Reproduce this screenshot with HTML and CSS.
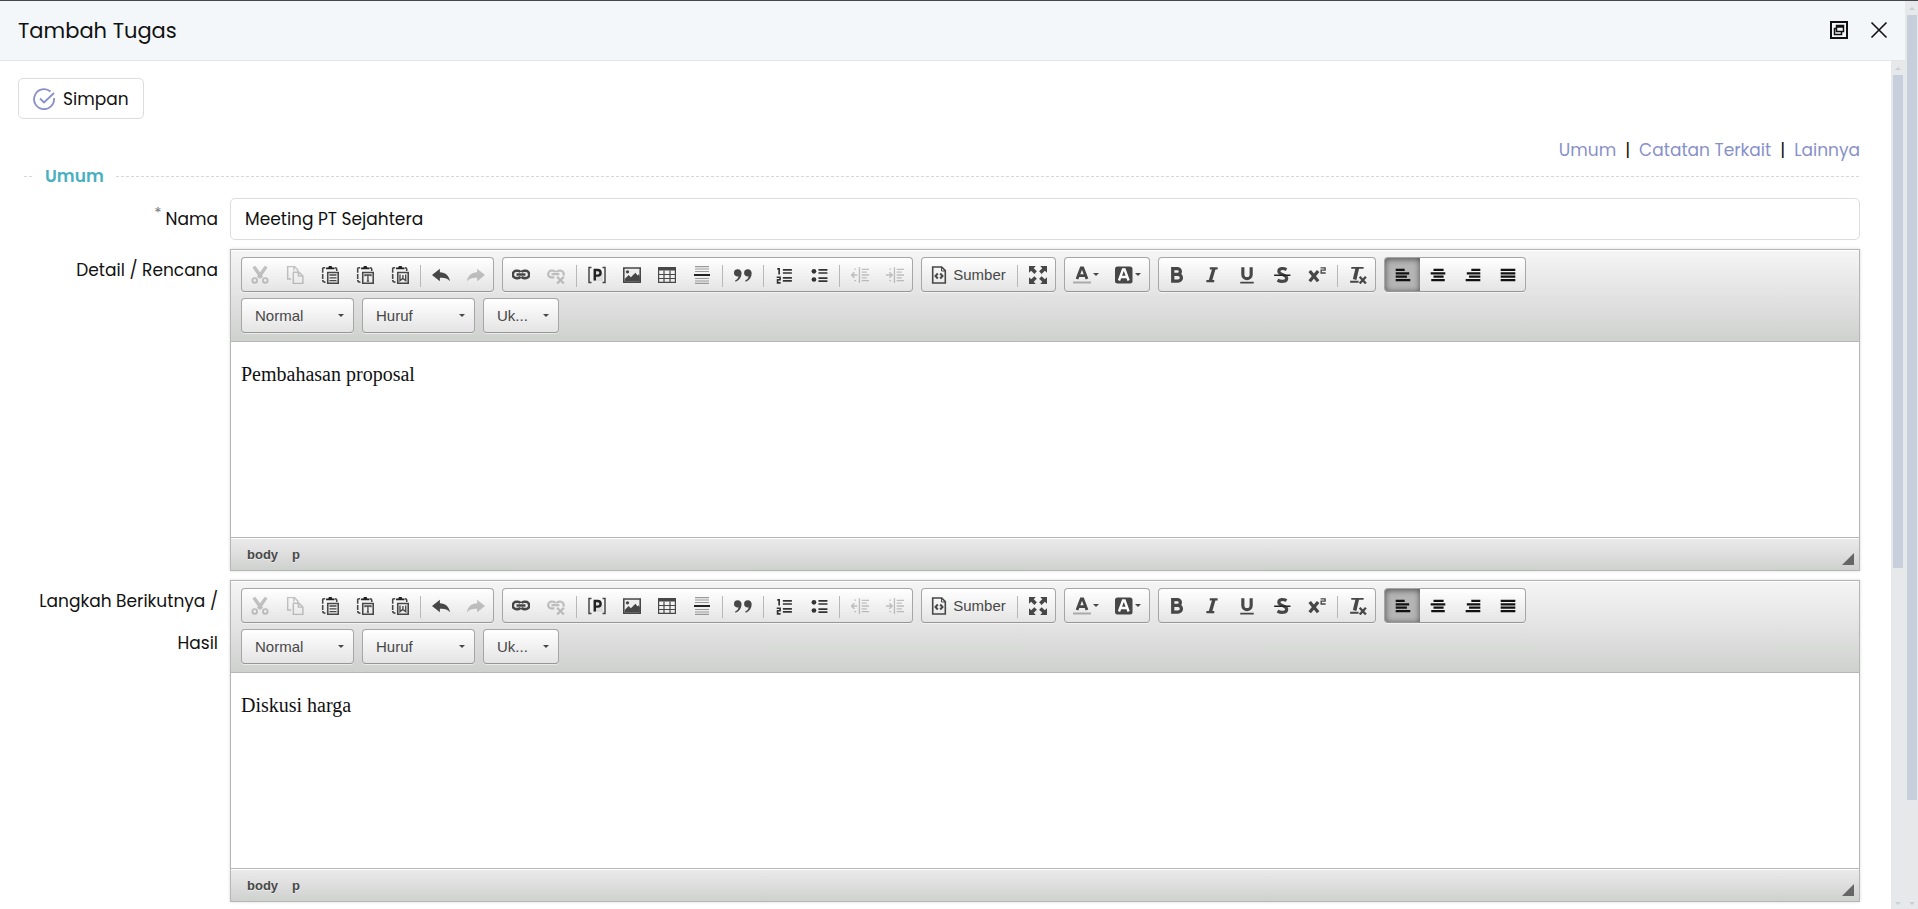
FILE: index.html
```html
<!DOCTYPE html>
<html lang="id">
<head>
    <meta charset="UTF-8">
    <meta name="viewport" content="width=device-width, initial-scale=1.0">
    <title>Tambah Tugas</title>
    <link rel="stylesheet" href="styles.css">
</head>
<body>

    <!-- icon set -->
    <svg class="icon-set" aria-hidden="true">
        <symbol id="i-cut" viewBox="0 0 16 16"><path d="M2.500 .500l7 10M13.500 .500l-7 10" fill="none" stroke="currentColor" stroke-width="3"/><circle cx="3.300" cy="12.800" r="2.100" fill="none" stroke="currentColor" stroke-width="1.600"/><circle cx="12.700" cy="12.800" r="2.100" fill="none" stroke="currentColor" stroke-width="1.600"/></symbol>
        <symbol id="i-copy" viewBox="0 0 16 16"><path d="M4.500 11.500h-3v-11h6l3 3v1.500M7 .500v3.500M6.500 5.500h5l3.500 3.500v6.500H6.500zM11 5.500V9h4" fill="none" stroke="currentColor" stroke-width="1.300"/></symbol>
        <symbol id="i-clip" viewBox="0 0 16 16"><path d="M3.700 1.500H2.500Q1.500 1.500 1.500 2.500V6M1.500 7v4.500M1.500 12.500q0 2 2.500 2M12.300 1.500q1.700 0 1.700 1.500v1.500" fill="none" stroke="currentColor" stroke-width="1.400"/><path d="M4.500 2.800V1.300h2L7 0h2.500l.500 1.300h2v1.500z" fill="#222"/><path d="M6 5.700h9.300v9.600H6z" fill="none" stroke="currentColor" stroke-width="1.400"/></symbol>
        <symbol id="i-paste" viewBox="0 0 16 16"><use href="#i-clip"/><path d="M7.500 8h6.300M7.500 10.500h6.300M7.500 13h6.300" stroke="currentColor" stroke-width="1.200"/></symbol>
        <symbol id="i-pastetext" viewBox="0 0 16 16"><use href="#i-clip"/><path d="M8 9V8h5.300v1M10.600 8v5.500M9.600 13.400h2" fill="none" stroke="currentColor" stroke-width="1.200"/></symbol>
        <symbol id="i-pasteword" viewBox="0 0 16 16"><use href="#i-clip"/><path d="M8 7.500v5.500l2.500-2 2.600 2V7.500M10.600 8v3" fill="none" stroke="currentColor" stroke-width="1.200"/></symbol>
        <symbol id="i-undo" viewBox="0 0 16 16"><path d="M0 8l7-5.500v3c5 0 8.500 3.500 9 8-2.500-2.800-5-3.200-9-3V13.500z" fill="currentColor"/></symbol>
        <symbol id="i-redo" viewBox="0 0 16 16"><path d="M16 8L9 2.500v3C4 5.500 .500 9 0 13.500c2.500-2.800 5-3.200 9-3V13.500z" fill="currentColor"/></symbol>
        <symbol id="i-link" viewBox="0 0 16 16"><path d="M7.500 5.500C7 4.500 6 4.200 5 4.200H4a3.200 3.200 0 0 0 0 6.600h1c1 0 2-.300 2.500-1.300M8.500 5.500c.500-1 1.500-1.300 2.500-1.300h1a3.200 3.200 0 0 1 0 6.600h-1c-1 0-2-.300-2.500-1.300" fill="none" stroke="currentColor" stroke-width="2.300"/><path d="M4 7.500h8" stroke="currentColor" stroke-width="2.200"/></symbol>
        <symbol id="i-unlink" viewBox="0 0 16 16"><path d="M7.500 5.500C7 4.500 6 4.200 5 4.200H4a3 3 0 0 0 0 6h2.500M8.500 5.500c.500-1 1.500-1.300 2.500-1.300h1a3 3 0 0 1 2.500 4.300M4 7.200h7" fill="none" stroke="currentColor" stroke-width="2"/><path d="M9 9.500l6 6M15 9.500l-6 6" stroke="currentColor" stroke-width="2"/></symbol>
        <symbol id="i-placeholder" viewBox="0 0 18 16"><path d="M3.500 .500H1v15h2.500M14.500 .500H17v15h-2.500" fill="none" stroke="currentColor" stroke-width="1.500"/><path d="M5 3h6l4 4v7H5z" fill="#ddd"/><path d="M6.800 13.500V3h3a2.700 2.700 0 0 1 0 5.600h-3" fill="none" stroke="#222" stroke-width="2.400"/></symbol>
        <symbol id="i-image" viewBox="0 0 16 16"><path d="M.700 1.700h14.600v12.600H.700z" fill="#eee" stroke="currentColor" stroke-width="1.400"/><circle cx="4" cy="5.200" r="1.500" fill="currentColor"/><path d="M1.500 13.500v-2l3.500-3.500 2 2 4-4 2 2.500 1-1.200 1 2v4.200z" fill="currentColor"/></symbol>
        <symbol id="i-table" viewBox="0 0 18 16"><path d="M0 0h18v3.500H0z" fill="currentColor"/><path d="M.600 3v12.400h16.800V3M6 3.500V15M12 3.500V15M0 7.500h18M0 11.500h18" fill="none" stroke="currentColor" stroke-width="1.200"/></symbol>
        <symbol id="i-break" viewBox="0 0 16 18"><path d="M1 .600h14M1 3h14M1 5.500h14M1 12.500h14M1 15h14M1 17.400h14" stroke="#999" stroke-width="1.200"/><path d="M0 9h16" stroke="#222" stroke-width="2"/></symbol>
        <symbol id="i-quote" viewBox="0 0 16 16"><g fill="currentColor"><path d="M3.300 3a3.200 3.200 0 0 1 3.400 3.500C6.700 10 5 12.500 1.500 14l-.700-1C2.800 12 4 10.800 4 9.200A3 3 0 0 1 0 6.200 3.200 3.200 0 0 1 3.300 3z"/><path d="M12.300 3a3.200 3.200 0 0 1 3.400 3.500c0 3.500-1.700 6-5.200 7.500l-.700-1c2-1 3.200-2.200 3.200-3.800a3 3 0 0 1-4-3A3.200 3.200 0 0 1 12.300 3z"/></g></symbol>
        <symbol id="i-ol" viewBox="0 0 16 16"><path d="M2 2.500h1.700V7.500M1.500 10h3v2.200H2.300V15H5" fill="none" stroke="#333" stroke-width="1.500"/><path d="M7 3.500h8M7 6.200h8M7 10.500h8M7 13.200h8" stroke="#333" stroke-width="1.500"/></symbol>
        <symbol id="i-ul" viewBox="0 0 16 16"><circle cx="3.500" cy="4.700" r="2.100" fill="#333"/><circle cx="3.500" cy="12" r="2.100" fill="#333"/><path d="M7.500 3.500h8M7.500 6.200h8M7.500 10.700h8M7.500 13.400h8" stroke="#333" stroke-width="1.500"/></symbol>
        <symbol id="i-outdent" viewBox="0 0 16 16"><path d="M7.500 1v14" stroke="currentColor" stroke-width="1.200"/><path d="M9.500 3H16M9.500 5.500h4.500M9.500 8H16M9.500 10.500h4.500M9.500 13H16M0 8h5.500M3 5.500L.500 8 3 10.500M3 2.800h1.500M3 13h1.500" fill="none" stroke="currentColor" stroke-width="1.200"/></symbol>
        <symbol id="i-indent" viewBox="0 0 16 16"><path d="M7.500 1v14" stroke="currentColor" stroke-width="1.200"/><path d="M9.500 3H16M9.500 5.500h4.500M9.500 8H16M9.500 10.500h4.500M9.500 13H16M0 8h5.500M3 5.500L5.500 8 3 10.500M3 2.800h1.500M3 13h1.500" fill="none" stroke="currentColor" stroke-width="1.200"/></symbol>
        <symbol id="i-source" viewBox="0 0 16 18"><path d="M1.700 1h9l3.600 3.600V17H1.700z" fill="none" stroke="currentColor" stroke-width="1.600"/><path d="M10.500 1v4h4" fill="none" stroke="currentColor"/><path d="M6.800 7.500L4.500 10l2.300 2.500M9.200 7.500l2.300 2.500-2.300 2.500" fill="none" stroke="currentColor" stroke-width="2"/></symbol>
        <symbol id="i-max" viewBox="0 0 16 16"><path d="M0 0h6L4.200 1.900 7 4.700 4.800 7 1.900 4.200 0 6zM16 0h-6l1.800 1.900L9 4.700 11.200 7l2.900-2.800L16 6zM0 16h6l-1.800-1.900L7 11.300 4.800 9l-2.900 2.800L0 10zM16 16h-6l1.800-1.900L9 11.300 11.200 9l2.900 2.800L16 10z" fill="currentColor"/></symbol>
        <symbol id="i-color" viewBox="0 0 18 18"><path d="M4 13L8.200 2h1.600L14 13M5.500 9.700h7" fill="none" stroke="currentColor" stroke-width="2.800"/><path d="M0 15.500h18v2H0z" fill="#aaa"/></symbol>
        <symbol id="i-bgcolor" viewBox="0 0 18 18"><rect width="17.500" height="17" rx="2.500" y=".500" fill="currentColor"/><path d="M4 14.500L8 3.500h1.600l4 11M5.500 11h7" fill="none" stroke="#fff" stroke-width="2.400"/></symbol>
        <symbol id="i-bold" viewBox="0 0 16 16"><path d="M4.200 2.300h4.200a2.600 2.600 0 0 1 0 5.200H4.200h4.700a3 3 0 0 1 0 6H4.200z" fill="none" stroke="currentColor" stroke-width="2.900"/></symbol>
        <symbol id="i-italic" viewBox="0 0 16 16"><path d="M6 2h7M3 13.500h7" stroke="currentColor" stroke-width="2"/><path d="M9.800 2L6.300 14" stroke="currentColor" stroke-width="3"/></symbol>
        <symbol id="i-underline" viewBox="0 0 16 16"><path d="M4.300 1V7.500a3.700 3.700 0 0 0 7.400 0V1" fill="none" stroke="currentColor" stroke-width="2.800"/><path d="M2 14.700h12" stroke="currentColor" stroke-width="1.500"/></symbol>
        <symbol id="i-strike" viewBox="0 0 16 16"><path d="M12 3.200C9.500 1.800 5.200 1.700 5.200 4.600c0 3.300 7 2.800 7 6.200 0 3.500-5.200 3.400-8.200 1.700" fill="none" stroke="currentColor" stroke-width="2.800"/><path d="M1 8.200h14.500" stroke="#222" stroke-width="1.500"/></symbol>
        <symbol id="i-sup" viewBox="0 0 16 16"><path d="M1.500 4.500l7.500 9M9 4.500l-7.500 9" stroke="currentColor" stroke-width="2.900"/><path d="M11.200 1.700h4v2h-3.500v2.500h4" fill="none" stroke="currentColor" stroke-width="1.200"/></symbol>
        <symbol id="i-clear" viewBox="0 0 16 16"><path d="M2 1.700h11M1 14h7.500" stroke="currentColor" stroke-width="1.600"/><path d="M7.500 1.500L5 12" stroke="currentColor" stroke-width="3.200"/><path d="M9.500 9.500l5.500 6M15 9.500l-5.500 6" stroke="currentColor" stroke-width="2.100"/></symbol>
        <symbol id="i-left" viewBox="0 0 16 16"><path d="M1.500 3h8M1.500 6h12M1.500 9h10M1.500 12h13" transform="translate(0 .500)" stroke="#111" stroke-width="1.900"/></symbol>
        <symbol id="i-center" viewBox="0 0 16 16"><path d="M4 3h9M1.500 6h13M4 9h9M2 12h12" transform="translate(0 .500)" stroke="#111" stroke-width="1.900"/></symbol>
        <symbol id="i-right" viewBox="0 0 16 16"><path d="M6.500 3h8M2.500 6h12M4.500 9h10M1.500 12h13" transform="translate(0 .500)" stroke="#111" stroke-width="1.900"/></symbol>
        <symbol id="i-justify" viewBox="0 0 16 16"><path d="M1.500 3h13M1.500 6h13M1.500 9h13M1.500 12h13" transform="translate(0 .500)" stroke="#111" stroke-width="1.900"/></symbol>
    </svg>

    <!-- toolbar shared by every editor on the form -->
    <template id="toolbar">
        <div class="tool-row">
            <div class="group">
                <button type="button" class="tool" disabled title="Potong"><svg><use href="#i-cut"/></svg></button>
                <button type="button" class="tool" disabled title="Salin"><svg><use href="#i-copy"/></svg></button>
                <button type="button" class="tool" title="Tempel"><svg><use href="#i-paste"/></svg></button>
                <button type="button" class="tool" title="Tempel sebagai teks"><svg><use href="#i-pastetext"/></svg></button>
                <button type="button" class="tool" title="Tempel dari Word"><svg><use href="#i-pasteword"/></svg></button>
                <span class="sep"></span>
                <button type="button" class="tool" title="Batal"><svg><use href="#i-undo"/></svg></button>
                <button type="button" class="tool" disabled title="Ulangi"><svg><use href="#i-redo"/></svg></button>
            </div>
            <div class="group">
                <button type="button" class="tool" title="Tautan"><svg><use href="#i-link"/></svg></button>
                <button type="button" class="tool" disabled title="Hapus tautan"><svg><use href="#i-unlink"/></svg></button>
                <span class="sep"></span>
                <button type="button" class="tool" title="Placeholder"><svg><use href="#i-placeholder"/></svg></button>
                <button type="button" class="tool" title="Gambar"><svg><use href="#i-image"/></svg></button>
                <button type="button" class="tool" title="Tabel"><svg><use href="#i-table"/></svg></button>
                <button type="button" class="tool" title="Pemisah halaman"><svg><use href="#i-break"/></svg></button>
                <span class="sep"></span>
                <button type="button" class="tool" title="Kutipan"><svg><use href="#i-quote"/></svg></button>
                <span class="sep"></span>
                <button type="button" class="tool" title="Daftar bernomor"><svg><use href="#i-ol"/></svg></button>
                <button type="button" class="tool" title="Daftar"><svg><use href="#i-ul"/></svg></button>
                <span class="sep"></span>
                <button type="button" class="tool" disabled title="Kurangi indentasi"><svg><use href="#i-outdent"/></svg></button>
                <button type="button" class="tool" disabled title="Tambah indentasi"><svg><use href="#i-indent"/></svg></button>
            </div>
            <div class="group">
                <button type="button" class="tool source"><svg><use href="#i-source"/></svg>Sumber</button>
                <span class="sep"></span>
                <button type="button" class="tool" title="Perbesar"><svg><use href="#i-max"/></svg></button>
            </div>
            <div class="group">
                <button type="button" class="tool color" title="Warna teks"><svg><use href="#i-color"/></svg><span class="caret"></span></button>
                <button type="button" class="tool color" title="Warna latar"><svg><use href="#i-bgcolor"/></svg><span class="caret"></span></button>
            </div>
            <div class="group">
                <button type="button" class="tool" title="Tebal"><svg><use href="#i-bold"/></svg></button>
                <button type="button" class="tool" title="Miring"><svg><use href="#i-italic"/></svg></button>
                <button type="button" class="tool" title="Garis bawah"><svg><use href="#i-underline"/></svg></button>
                <button type="button" class="tool" title="Coret"><svg><use href="#i-strike"/></svg></button>
                <button type="button" class="tool" title="Superskrip"><svg><use href="#i-sup"/></svg></button>
                <span class="sep"></span>
                <button type="button" class="tool" title="Hapus format"><svg><use href="#i-clear"/></svg></button>
            </div>
            <div class="group">
                <button type="button" class="tool active" title="Rata kiri"><svg><use href="#i-left"/></svg></button>
                <button type="button" class="tool" title="Rata tengah"><svg><use href="#i-center"/></svg></button>
                <button type="button" class="tool" title="Rata kanan"><svg><use href="#i-right"/></svg></button>
                <button type="button" class="tool" title="Rata kiri-kanan"><svg><use href="#i-justify"/></svg></button>
            </div>
        </div>
        <div class="tool-row">
            <label class="combo"><select aria-label="Format"><option>Normal</option></select><span class="caret"></span></label>
            <label class="combo"><select aria-label="Huruf"><option>Huruf</option></select><span class="caret"></span></label>
            <label class="combo small"><select aria-label="Ukuran"><option>Uk...</option></select><span class="caret"></span></label>
        </div>
    </template>

    <div class="page">
        <div class="dialog">
            <header class="dialog-header">
                <h1>Tambah Tugas</h1>
                <button type="button" class="header-button" title="Buka di jendela baru">
                    <svg width="18" height="18" viewBox="0 0 18 18" fill="none" stroke="#111"><path d="M1 1h16v16H1z" stroke-width="2"/><path d="M6.500 4.500h7v6h-7zM6.500 6h7M6 7.500H4.500v6h7V11" stroke-width="1.500"/></svg>
                </button>
                <button type="button" class="header-button" title="Tutup">
                    <svg width="18" height="18" viewBox="0 0 18 18" fill="none" stroke="#111"><path d="M1.500 1.500l15 15M16.500 1.500l-15 15" stroke-width="1.600"/></svg>
                </button>
            </header>

            <div class="dialog-body">
                <form class="content" onsubmit="event.preventDefault();">
                    <button type="submit" class="save">
                        <svg width="22" height="22" viewBox="0 0 22 22" fill="none" stroke="#8790c8" stroke-width="1.800"><path d="M17.500 3.500A10 10 0 1 0 21 10"/><path d="M7 10.500l4 4L21 5"/></svg>
                        Simpan
                    </button>

                    <nav class="section-links">
                        <a href="#umum">Umum</a><span>|</span><a href="#catatan">Catatan Terkait</a><span>|</span><a href="#lainnya">Lainnya</a>
                    </nav>

                    <h2 class="section-title" id="umum">Umum</h2>

                    <div class="field">
                        <label for="nama"><span class="required">*</span>Nama</label>
                        <input type="text" id="nama" value="Meeting PT Sejahtera">
                    </div>

                    <div class="field">
                        <label id="detail-label">Detail / Rencana</label>
                        <div class="editor">
                            <div class="toolbar"></div>
                            <div class="editor-text" contenteditable="true" spellcheck="false" role="textbox" aria-labelledby="detail-label"><p>Pembahasan proposal</p></div>
                            <div class="editor-footer"><a href="#">body</a><a href="#">p</a><span class="resizer"></span></div>
                        </div>
                    </div>

                    <div class="field">
                        <label id="hasil-label">Langkah Berikutnya / Hasil</label>
                        <div class="editor">
                            <div class="toolbar"></div>
                            <div class="editor-text" contenteditable="true" spellcheck="false" role="textbox" aria-labelledby="hasil-label"><p>Diskusi harga</p></div>
                            <div class="editor-footer"><a href="#">body</a><a href="#">p</a><span class="resizer"></span></div>
                        </div>
                    </div>
                </form>

                <div class="scrollbar inner"><span class="up"></span><span class="track"><span class="thumb"></span></span><span class="down"></span></div>
            </div>
        </div>
        <div class="scrollbar outer"><span class="up"></span><span class="track"><span class="thumb"></span></span><span class="down"></span></div>
    </div>

    <script>
        const toolbar = document.getElementById('toolbar');
        document.querySelectorAll('.toolbar').forEach(el => {
            el.appendChild(toolbar.content.cloneNode(true));
        });
    </script>

</body>
</html>
```

FILE: styles.css
```css
* {
    box-sizing: border-box;
}

body {
    margin: 0;
    font-family: Poppins, Inter, sans-serif;
    font-size: 17px;
    color: #111111;
    background-color: #ffffff;
}

button, input, select {
    font: inherit;
    color: inherit;
}

.icon-set {
    display: none;
}

.page {
    display: flex;
    height: 100vh;
    overflow: hidden;
    border-top: 1px solid #47474a;
}

.dialog {
    flex: 1;
    display: flex;
    flex-direction: column;
    min-width: 0;
}

.dialog-header {
    display: flex;
    align-items: center;
    gap: 22px;
    height: 60px;
    flex-shrink: 0;
    padding: 0 17px 0 18px;
    background-color: #f4f7fa;
    border-bottom: 1px solid #e2e6ea;
}

.dialog-header h1 {
    flex: 1;
    margin: 0;
    font-size: 21px;
    font-weight: 400;
}

.header-button {
    display: flex;
    padding: 0;
    border: none;
    background: none;
    cursor: pointer;
}

.header-button svg {
    margin-bottom: 2px;
}

.dialog-body {
    flex: 1;
    display: flex;
    min-height: 0;
}

.content {
    flex: 1;
    min-width: 0;
    padding: 17px 31px 0 18px;
    overflow: hidden;
}

.save {
    display: flex;
    align-items: center;
    gap: 8px;
    height: 41px;
    padding: 0 14px;
    background-color: #ffffff;
    border: 1px solid #dddddd;
    border-radius: 5px;
    cursor: pointer;
}

/* section links and title */
.section-links {
    display: flex;
    justify-content: flex-end;
    gap: 9px;
    margin-top: 18px;
    line-height: 26px;
}

.section-links a {
    color: #8790c8;
    text-decoration: none;
}

.section-title {
    display: flex;
    align-items: center;
    gap: 12px;
    margin: 0 0 9px 6px;
    font-size: 17px;
    font-weight: 600;
    line-height: 26px;
    color: #4ab0c1;
}

.section-title::before,
.section-title::after {
    content: "";
    width: 9px;
    height: 1px;
    background: repeating-linear-gradient(to right, #d8d8d8 0 3px, transparent 3px 5px);
}

.section-title::after {
    flex: 1;
}

/* form rows */
.field {
    display: flex;
    gap: 12px;
    margin: 0 0 9px 6px;
}

.field label:not(.combo) {
    width: 194px;
    flex-shrink: 0;
    line-height: 42px;
    text-align: right;
}

.required {
    margin-right: 4px;
    font-size: 15px;
    color: #777777;
    vertical-align: 7px;
    line-height: 1;
}

.field input {
    flex: 1;
    height: 42px;
    padding: 0 14px;
    border: 1px solid #dddddd;
    border-radius: 5px;
    outline: none;
}

/* rich text editor */
.editor {
    flex: 1;
    min-width: 0;
    border: 1px solid #b6b6b6;
    box-shadow: 0 0 3px rgba(0, 0, 0, 0.15);
    font-family: "Liberation Sans", Arial, sans-serif;
}

.toolbar {
    display: flex;
    flex-direction: column;
    gap: 6px;
    padding: 7px 10px 8px;
    border-bottom: 1px solid #b6b6b6;
    background: linear-gradient(to bottom, #f5f5f5, #cfd1cf);
    box-shadow: inset 0 1px 0 #ffffff;
}

.tool-row {
    display: flex;
    flex-wrap: wrap;
    gap: 6px 8px;
}

.group,
.combo {
    display: flex;
    height: 35px;
    border: 1px solid #a6a6a6;
    border-bottom-color: #979797;
    border-radius: 4px;
    background: linear-gradient(to bottom, #ffffff, #e4e4e4);
    box-shadow: 0 1px 0 rgba(255, 255, 255, 0.5);
    color: #474747;
    overflow: hidden;
}

.tool {
    display: flex;
    align-items: center;
    justify-content: center;
    width: 35px;
    padding: 0;
    border: none;
    background: none;
    cursor: pointer;
}

.tool svg {
    width: 18px;
    height: 18px;
}

.tool:disabled {
    opacity: 0.3;
    cursor: default;
}

.tool.active {
    background-color: #b5b5b5;
    box-shadow: inset 0 1px 6px rgba(0, 0, 0, 0.6);
}

.source {
    width: 92px;
    gap: 5px;
    font-size: 15px;
}

.color {
    width: 42px;
    gap: 2px;
}

.sep {
    width: 1px;
    height: 22px;
    margin: 7px 2px 0 3px;
    background-color: #b8b8b8;
}

.caret {
    border: 3px solid transparent;
    border-top-color: #474747;
    border-bottom: none;
}

.combo {
    width: 113px;
    align-items: center;
    padding-right: 9px;
}

.combo select {
    flex: 1;
    min-width: 0;
    height: 100%;
    padding: 0 0 0 13px;
    border: none;
    background: none;
    appearance: none;
    font-size: 15px;
    outline: none;
}

.combo.small {
    width: 76px;
}

.editor-text {
    height: 195px;
    padding: 20px 10px;
    background-color: #ffffff;
    font-family: "Liberation Serif", "Times New Roman", serif;
    font-size: 20px;
    line-height: 24px;
    outline: none;
}

.editor-text p {
    margin: 0;
}

.editor-footer {
    display: flex;
    align-items: center;
    gap: 14px;
    height: 33px;
    padding: 0 5px 0 16px;
    border-top: 1px solid #b6b6b6;
    background: linear-gradient(to bottom, #ebebeb, #cfd1cf);
    box-shadow: inset 0 1px 0 #ffffff;
}

.editor-footer a {
    font-size: 13px;
    font-weight: 700;
    color: #484848;
    text-decoration: none;
    text-shadow: 0 1px 0 rgba(255, 255, 255, 0.5);
}

.resizer {
    align-self: flex-end;
    margin: 0 0 5px auto;
    border: 6px solid transparent;
    border-right-color: #666666;
    border-bottom-color: #666666;
}

/* scrollbars */
.scrollbar {
    display: flex;
    flex-direction: column;
    align-items: center;
    flex-shrink: 0;
    width: 14px;
    padding: 6px 0 4px;
    background-color: #e7e8ea;
}

.scrollbar.outer {
    width: 13px;
}

.up,
.down {
    border: 3px solid transparent;
}

.up {
    border-top: none;
    border-bottom-color: #c8cfdc;
}

.down {
    border-bottom: none;
    border-top-color: #c8cfdc;
}

.track {
    flex: 1;
    margin: 5px 0;
}

.thumb {
    display: block;
    width: 10px;
    height: 60%;
    background-color: #c8cfdc;
}

.outer .thumb {
    height: 89%;
}
```
